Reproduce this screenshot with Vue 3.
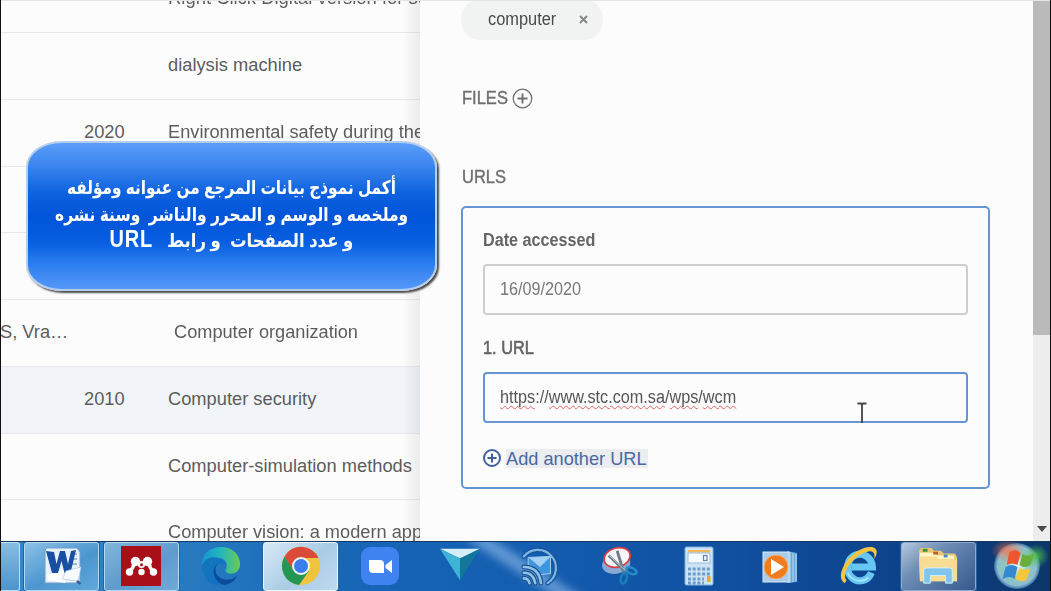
<script setup>
const rows = [
  { year: '', title: 'Right Click Digital version for sc', w: 259 },
  { year: '', title: 'dialysis machine', w: 134 },
  { year: '2020', title: 'Environmental safety during the', w: 256 },
  { year: '', title: '' },
  { year: '', title: '' },
  { author: 'S, Vra…', year: '', title: 'Computer organization', w: 184, indent: true },
  { year: '2010', title: 'Computer security', w: 148, active: true },
  { year: '', title: 'Computer-simulation methods', w: 244 },
  { year: '', title: 'Computer vision: a modern app', w: 254 },
]
const note = [
  { text: 'أكمل نموذج بيانات المرجع من عنوانه ومؤلفه', w: 329 },
  { text: 'وملخصه و الوسم و المحرر والناشر  وسنة نشره', w: 353 },
  { text: 'و عدد الصفحات  و رابط   ', latin: 'URL', w: 244 },
]
const url = [
  { t: 'https', bad: true }, { t: '://' }, { t: 'www.stc.com.sa', bad: true },
  { t: '/' }, { t: 'wps', bad: true }, { t: '/' }, { t: 'wcm', bad: true },
]
// Stretches or condenses a line of text to a given width.
const vFit = {
  mounted(el, { value }) {
    if (value) el.style.transform = `scaleX(${value / el.offsetWidth})`
  },
}
</script>

<template>
  <div class="screen">
    <div class="work">
      <div class="list">
        <div v-for="(r, i) in rows" :key="i" class="row" :class="{ active: r.active }">
          <span class="author">{{ r.author }}</span>
          <span class="year">{{ r.year }}</span>
          <span class="title" :class="{ indent: r.indent }"><span v-fit="r.w" class="fit">{{ r.title }}</span></span>
        </div>
        <div class="shade"></div>
      </div>

      <div class="panel">
        <div class="content">
          <div class="tag"><span v-fit="68" class="fit">computer</span>
            <svg class="x" width="9" height="9" viewBox="0 0 9 9"><path d="M1 1L8 8M8 1L1 8" stroke="#858585" stroke-width="1.9" /></svg>
          </div>
          <div class="head files"><span class="w46"><span v-fit="46" class="fit">FILES</span></span>
            <svg width="21" height="21" viewBox="0 0 21 21" fill="none" stroke="#707070"><circle cx="10.5" cy="10.5" r="9.3" stroke-width="1.3" /><path d="M10.5 5.5V15.5M5.5 10.5H15.5" stroke-width="1.9" /></svg>
          </div>
          <div class="head urls"><span v-fit="44" class="fit">URLS</span></div>
          <div class="box">
            <div class="label"><span v-fit="112" class="fit">Date accessed</span></div>
            <div class="field"><span v-fit="81" class="fit">16/09/2020</span></div>
            <div class="label second"><span v-fit="51" class="fit">1. URL</span></div>
            <div class="field focus"><span v-fit="236" class="fit dark"><span v-for="(p, i) in url" :key="i" :class="{ bad: p.bad }">{{ p.t }}</span></span>
              <svg class="beam" width="10" height="22" viewBox="0 0 10 22"><path d="M.5 1.5H4L5 2.5L6 1.5H9.5M5 2V21" fill="none" stroke="#444" stroke-width="1.8" /></svg>
            </div>
            <div class="add">
              <svg width="20" height="20" viewBox="0 0 20 20" fill="none" stroke="#40609f"><circle cx="10" cy="10" r="8" stroke-width="2" /><path d="M10 5.5V14.5M5.5 10H14.5" stroke-width="2" /></svg>
              <span class="addtext"><span v-fit="141" class="fit">Add another URL</span></span>
            </div>
          </div>
        </div>
        <div class="scroll"><div class="thumb"></div>
          <svg width="10" height="6" viewBox="0 0 10 6"><path d="M0 0H10L5 6Z" fill="#4a4a4a" /></svg>
        </div>
      </div>

      <div class="note" dir="rtl">
        <div v-for="(l, i) in note" :key="i" class="line"><span v-fit="l.w" class="fit">{{ l.text }}<span v-if="l.latin" class="latin">{{ l.latin }}</span></span></div>
      </div>
    </div>

    <div class="taskbar">
      <div class="stub"></div>
      <div class="cell open">
        <svg viewBox="0 0 40 40">
          <path d="M4 2H35L38 6V37H3V6Z" fill="#e8f1fa" stroke="#6f9fca" />
          <path d="M30 8H35M30 13H35M30 18H35" stroke="#9dbcdd" stroke-width="2" />
          <path d="M5 29L25 23L23 37L6 34Z" fill="#fff" />
          <path d="M4 5L12 6L14.500 18L18 5H23L26 18L29 5L34 4L28.500 27H22.500L19.500 15L16 27H10Z" fill="#184fa2" />
          <path d="M24 25L39 21L36 35L20 33Z" fill="#f7faff" stroke="#b2c9e2" stroke-width=".7" /><path d="M36 34L39 37L38 39L34 36Z" fill="#385c8f" />
        </svg>
      </div>
      <div class="cell open warm">
        <svg viewBox="0 0 40 40">
          <rect width="40" height="40" fill="#a80f19" />
          <g fill="#fff"><circle cx="14.500" cy="15.500" r="4.700" /><circle cx="26.500" cy="15.500" r="4.700" /><circle cx="8.500" cy="26" r="3.700" /><circle cx="20.500" cy="26" r="3.200" /><circle cx="32.500" cy="26" r="3.700" /></g>
          <path d="M9 25Q12.500 22 13 17M32 25Q28.500 22 28 17M14 15Q20.500 21 27 15" fill="none" stroke="#fff" stroke-width="3.500" /><circle cx="20.500" cy="18.500" r="3.600" fill="#fff" />
          <circle cx="20.500" cy="18.800" r="1.500" fill="#a80f19" />
        </svg>
      </div>
      <div class="cell">
        <svg viewBox="0 0 42 42">
          <defs>
            <linearGradient id="edgeTop" x2="1"><stop stop-color="#1597d1" /><stop offset=".5" stop-color="#25b6bd" /><stop offset="1" stop-color="#69cc50" /></linearGradient>
            <linearGradient id="edgeLow" y2="1"><stop stop-color="#1377bb" /><stop offset="1" stop-color="#1271c4" /></linearGradient>
          </defs>
          <path d="M1 22C0 8 10 1 21 1C33 1 41 9 41 19C41 28 33 31 27 28C24 26 27 25 27 20C27 15 22 12 16 12C8 12 2 16 1 22Z" fill="url(#edgeTop)" />
          <path d="M1 22C2 15 8 11 15 12C21 12 26 16 26 20C20 16 15 20 15 26C15 33 20 39 27 40C13 45 1 35 1 22Z" fill="url(#edgeLow)" />
          <path d="M17 19C11 29 21 37 30 35C34 35 37 32 38 31C36 37 30 40 25 41C15 40 9 25 17 19Z" fill="#0b4b9c" />
        </svg>
      </div>
      <div class="cell open light">
        <svg viewBox="0 0 40 40">
          <circle cx="20" cy="20" r="19" fill="#f2c33c" />
          <path d="M3.500 10.500A19 19 0 0 1 37.500 12H20L12 25Z" fill="#db4b39" />
          <path d="M3.500 10.500A19 19 0 0 0 18 39L28 25L12 24Z" fill="#249653" />
          <circle cx="20" cy="20" r="9" fill="#f4f5f2" /><circle cx="20" cy="20" r="7" fill="#3b7ded" />
        </svg>
      </div>
      <div class="cell">
        <svg viewBox="0 0 40 40">
          <rect x="1" y="1" width="38" height="38" rx="9" fill="#3f82f0" />
          <path d="M9 14H20Q24 14 24 18V27H13Q9 27 9 23Z" fill="#fff" /><path d="M25.500 19L32 14V27L25.500 22Z" fill="#fff" />
        </svg>
      </div>
      <div class="cell">
        <svg viewBox="0 0 42 42">
          <path d="M0 3H42L21 13Z" fill="#d3eef6" /><path d="M0 3L21 13V36Z" fill="#3eb4d4" /><path d="M42 3L21 13V36Z" fill="#137799" />
        </svg>
      </div>
      <div class="cell">
        <svg viewBox="0 0 42 42" fill="none" stroke-linecap="round">
          <path d="M4 11A19 19 0 1 1 29 39" stroke="#14569b" stroke-width="5" />
          <path d="M4 11A19 19 0 1 1 29 39" stroke="#80b6df" stroke-width="2.300" />
          <path d="M9 12L32 11V29L22 30L9 21Z" fill="#3f96dc" stroke="#a5d2f2" /><path d="M9 12L21 22L32 11Z" fill="#a3cff1" />
          <path d="M4 22Q20 22 22 39M4 28Q14 28 16 39M4 34Q9 34 10 39" stroke="#184f8c" stroke-width="5" />
          <path d="M4 22Q20 22 22 39M4 28Q14 28 16 39M4 34Q9 34 10 39" stroke="#91c3e8" stroke-width="2.700" />
        </svg>
      </div>
      <div class="cell">
        <svg viewBox="0 0 42 42" fill="none">
          <ellipse cx="17" cy="19" rx="15" ry="10" fill="#87a9d4" transform="rotate(-12 17 19)" />
          <ellipse cx="18" cy="12" rx="14" ry="10" fill="#f6f7fa" stroke="#d73d43" stroke-width="1.800" transform="rotate(-16 18 12)" />
          <path d="M9 10L27 27M18 5L25 28" stroke="#6f7e88" stroke-width="3" /><path d="M10 10L27 26" stroke="#c3cdd4" />
          <ellipse cx="33" cy="26" rx="5.500" ry="3" transform="rotate(24 33 26)" stroke="#248cc8" stroke-width="2.800" /><ellipse cx="25" cy="34" rx="3" ry="5.500" transform="rotate(15 25 34)" stroke="#197eb9" stroke-width="2.800" />
        </svg>
      </div>
      <div class="cell">
        <svg viewBox="0 0 40 40">
          <rect x="6" y="1" width="28" height="38" rx="1.500" fill="#cce4f6" stroke="#7eafdb" />
          <rect x="9" y="4" width="22" height="2.500" fill="#efb75f" /><rect x="9" y="7" width="22" height="10" fill="#f6fbff" stroke="#9bbddb" />
          <rect x="24.500" y="9.500" width="3.500" height="5" fill="none" stroke="#5c86ac" stroke-width="1.200" />
          <path d="M9 23H31M9 28H31M9 33H25M9 37H25" stroke="#6d9cc9" stroke-width="3" stroke-dasharray="3 1.700" /><rect x="28" y="30" width="3.500" height="6" fill="#f2a72f" />
        </svg>
      </div>
      <div class="cell">
        <svg viewBox="0 0 40 40">
          <path d="M28 5L38 7V36L28 37Z" fill="#6ca9d7" /><path d="M31 6V37M34 7V36M37 8V35" stroke="#b9def5" />
          <rect x="4" y="6" width="26" height="30" fill="#a8cce9" stroke="#d4e9f7" />
          <circle cx="17" cy="21" r="12" fill="#f07c1d" stroke="#f4b178" /><path d="M12 13L25 21L12 29Z" fill="#fff" />
        </svg>
      </div>
      <div class="cell">
        <svg viewBox="0 0 42 42" fill="none">
          <path d="M34 28A13 14 0 1 1 35 22H13" stroke="#67c7f3" stroke-width="7.500" />
          <path d="M31 33A14 14 0 0 1 9 28" stroke="#a3e4fc" stroke-width="2" />
          <path d="M6 39C-7 31 14 0 34 1C42 2 40 9 37 14C38 8 36 4 30 6C15 9 2 29 8 36Z" fill="#f5c542" />
        </svg>
      </div>
      <div class="cell open dim">
        <svg viewBox="0 0 42 42">
          <path d="M1 5L3 2H14L17 5H24L27 8H39L41 12V37H2Z" fill="#ebc86f" />
          <path d="M2 7H18L20 10H38V14H2Z" fill="#fff3c8" /><path d="M5 3H10V6H5Z" fill="#38923d" /><path d="M16 6H21V9H16Z" fill="#b4632d" /><path d="M27 9H31V12H27Z" fill="#3b8fc5" />
          <path d="M1 11H19L22 14H41V37H2Z" fill="#f6dd93" />
          <path d="M6 39V26Q6 23 9 23H33Q36 23 36 26V39H29V31H13V39Z" fill="#81c4ec" stroke="#d5f0fc" />
        </svg>
      </div>
      <div class="cell orb">
        <svg viewBox="0 0 56 50">
          <defs><radialGradient id="orbGlow"><stop stop-color="#eafaf0" /><stop offset=".55" stop-color="#8ac7c1" /><stop offset=".85" stop-color="#8ebdd0" /><stop offset="1" stop-color="#326ca5" /></radialGradient>
            <radialGradient id="redGlow"><stop stop-color="#ff7048" stop-opacity=".8" /><stop offset="1" stop-color="#ff7048" stop-opacity="0" /></radialGradient>
            <radialGradient id="greenGlow"><stop stop-color="#51c34c" stop-opacity=".9" /><stop offset="1" stop-color="#51c34c" stop-opacity="0" /></radialGradient></defs>
          <circle cx="27" cy="25" r="23" fill="url(#orbGlow)" />
          <ellipse cx="18" cy="10" rx="17" ry="12" fill="url(#redGlow)" /><ellipse cx="46" cy="15" rx="13" ry="12" fill="url(#greenGlow)" />
          <g transform="translate(2.500 1)">
            <path d="M17 10Q23 6 28 11L25 23Q20 20 14 23Z" fill="#ef552f" /><path d="M30 12Q36 16 42 11L38 23Q32 27 27 23Z" fill="#68af3b" />
            <path d="M13 25Q19 21 25 25L22 37Q17 33 10 37Z" fill="#3489d3" /><path d="M27 26Q32 29 38 26L34 38Q29 41 23 37Z" fill="#f5c83c" />
          </g>
        </svg>
      </div>
    </div>
    <div class="edge"></div>
  </div>
</template>

<style>
html, body { margin: 0; overflow: hidden; }
</style>

<style scoped>
* { box-sizing: border-box; }
.screen { position: relative; width: 1051px; height: 591px; overflow: hidden; display: flex; flex-direction: column; background: #fcfcfc; font-family: "Liberation Sans", Arial, sans-serif; color: #5c5c5c; }
.work { position: relative; height: 541px; flex: none; display: flex; overflow: hidden; }
.edge { position: absolute; inset: 0; border: solid #101010; border-width: 0 1px; box-shadow: inset 0 1px #e5e5e5; pointer-events: none; }
.fit { display: inline-block; white-space: pre; transform-origin: 0 50%; }
.list { position: relative; width: 420px; flex: none; overflow: hidden; padding-top: 1px; font-size: 18.3px; }
.row { display: flex; height: 66.8px; line-height: 64px; border-bottom: 1px solid #e9e9e9; white-space: nowrap; }
.row:first-child { margin-top: -34.900px; }
.row.active { background: #f1f5f9; }
.author { width: 84px; flex: none; }
.year { width: 84px; flex: none; }
.title { flex: 1; overflow: hidden; }
.indent { padding-left: 6px; }
.shade { position: absolute; top: 0; right: 0; bottom: 0; width: 18px; background: linear-gradient(90deg, rgba(0,0,0,0), rgba(0,0,0,.065)); }
.panel { flex: 1; display: flex; justify-content: space-between; background: #fcfcfc; }
.content { width: 529px; margin-left: 41px; font-size: 17.6px; }
.tag { width: 142px; height: 41px; margin-top: -1px; padding: 0 15px 0 27px; display: flex; align-items: center; justify-content: space-between; border-radius: 20px; background: #f1f2f2; color: #4a4a4a; }
.head { display: flex; align-items: center; height: 22px; color: #6e6e6e; -webkit-text-stroke: .4px #6e6e6e; padding-left: 1px; }
.w46 { width: 50px; }
.files { margin-top: 47px; }
.urls { margin-top: 57px; }
.box { height: 283px; margin-top: 18px; padding: 21px 20px 0; border: 2px solid #6795d2; border-radius: 5px; }
.label { height: 22px; line-height: 22px; font-weight: bold; color: #656565; }
.second { margin-top: 22px; font-weight: normal; -webkit-text-stroke: .6px #656565; }
.field { position: relative; height: 51px; margin-top: 13px; padding-left: 15px; line-height: 47px; border: 2px solid #cdcdcd; border-radius: 4px; color: #777; }
.focus { border-color: #6795d2; }
.dark { color: #555; }
.bad { text-decoration: underline wavy #e4625f 1px; text-underline-offset: 2px; text-decoration-skip-ink: none; }
.beam { position: absolute; left: 372px; top: 28px; }
.add { display: flex; align-items: center; gap: 4px; margin-top: 25px; margin-left: -1px; height: 20px; color: #4a68a6; font-size: 18.2px; }
.addtext { width: 142px; height: 19px; line-height: 20px; background: #ebedef; white-space: nowrap; }
.scroll { width: 18px; display: flex; flex-direction: column; align-items: center; justify-content: space-between; padding-bottom: 9px; background: #ededed; }
.thumb { width: 18px; height: 335px; background: #bababa; }
.note { position: absolute; left: 26px; top: 141px; width: 411px; height: 150px; padding-top: 32px; border: 2px solid #b4cdf0; border-radius: 36px / 26px; background: linear-gradient(#5b9df8 0, #3f88ef 14%, #0f62df 34%, #0054d8 50%, #075ee0 68%, #2f80ef 84%, #5598f8 100%); box-shadow: 2px 2px 2px #4a4a4a; color: #fff; font: bold 19px "Liberation Sans", "DejaVu Sans", sans-serif; }
.line { display: flex; justify-content: center; height: 26.700px; line-height: 26.700px; }
.line .fit { transform-origin: 50% 50%; }
.latin { font-size: 23px; line-height: 20px; letter-spacing: 1px; }
.taskbar { position: relative; height: 50px; flex: none; display: flex; gap: 4.700px; overflow: hidden; border-top: 1px solid #17395f; background: linear-gradient(90deg, #3a87c4 0, #2577bf 20%, #1767b7 32%, #145db0 50%, #104f9f 70%, #0d438b 85%, #0b3669 100%); }
.taskbar::before { content: ""; position: absolute; left: 460px; top: 20px; width: 130px; height: 13px; transform: rotate(33deg); background: rgba(170,208,246,.55); filter: blur(5px); }
.stub { width: 19.500px; flex: none; border: 1px solid #bfe0f5; border-left: 0; border-radius: 0 3px 3px 0; background: linear-gradient(#87bce2, #4c94cc); }
.cell { position: relative; width: 75px; height: 49px; flex: none; display: flex; align-items: center; justify-content: center; padding-bottom: 2px; border: 1px solid transparent; border-radius: 3px; }
.cell svg { width: 40px; height: 40px; display: block; overflow: visible; }
.open { border-color: #b5d8f0; background: linear-gradient(150deg, #8cc2e7, #4c96cf 55%, #61a8da); box-shadow: 0 0 0 1px #2463a0; }
.warm { background: linear-gradient(150deg, #82b6dc, #5e9bcc 55%, #6faad8); }
.light { background: linear-gradient(135deg, #d8e9f5, #a9cce6 55%, #bdd9ee); border-color: #eaf5fb; }
.dim { background: linear-gradient(140deg, #b7c9df, #6e8db6 35%, #35598e); border-color: #8ea9ca; }
.cell.orb svg { width: 56px; height: 50px; flex: none; }
</style>
